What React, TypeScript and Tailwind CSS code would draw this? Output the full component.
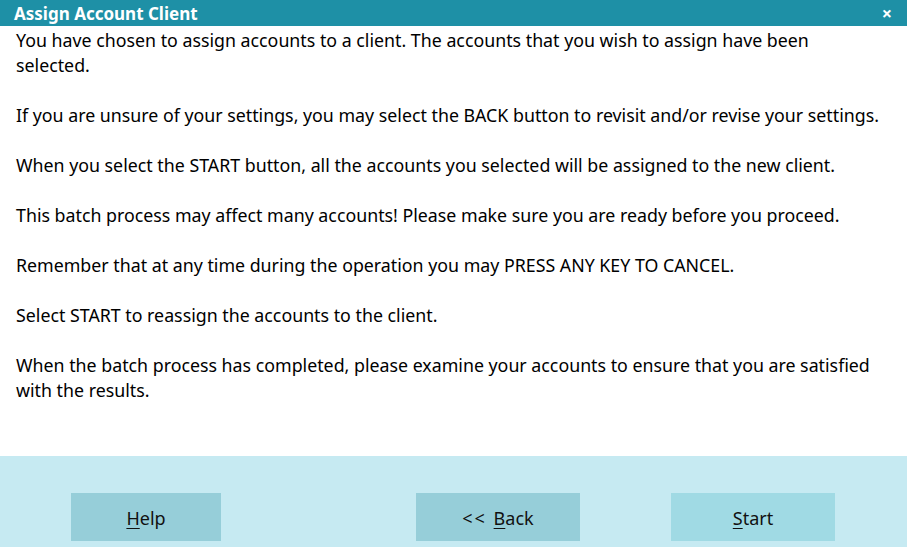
import React from "react";

const paragraphs = [
  "You have chosen to assign accounts to a client. The accounts that you wish to assign have been selected.",
  "If you are unsure of your settings, you may select the BACK button to revisit and/or revise your settings.",
  "When you select the START button, all the accounts you selected will be assigned to the new client.",
  "This batch process may affect many accounts! Please make sure you are ready before you proceed.",
  "Remember that at any time during the operation you may PRESS ANY KEY TO CANCEL.",
  "Select START to reassign the accounts to the client.",
  "When the batch process has completed, please examine your accounts to ensure that you are satisfied with the results.",
];

function Button({
  label,
  hotkey,
  prefix,
  width,
  active,
}: {
  label: string;
  hotkey: string;
  prefix?: string;
  width: string;
  active?: boolean;
}) {
  return (
    <button
      className={`h-[48px] ${width} ${
        active ? "bg-[#a0dae4]" : "bg-[#96ced9]"
      } text-[18px] text-[#111] flex items-center justify-center pt-[2px]`}
    >
      {prefix && (
        <span className="whitespace-pre tracking-[2px]">{prefix}</span>
      )}
      <span className="underline underline-offset-[3px]">{hotkey}</span>
      <span>{label}</span>
    </button>
  );
}

export default function App() {
  return (
    <div
      className="w-[907px] h-[547px] flex flex-col bg-white overflow-hidden"
      style={{ fontFamily: '"Noto Sans", "Open Sans", sans-serif' }}
    >
      {/* title bar */}
      <div className="h-[26px] bg-[#1e90a6] flex items-center justify-between pl-[14px] pr-[15px] text-white">
        <span className="text-[17px] font-bold leading-none">
          Assign Account Client
        </span>
        <span className="text-[18px] font-bold leading-none">×</span>
      </div>

      {/* message */}
      <div className="flex-1 pl-[16px] pr-[25px] pt-[2px] flex flex-col gap-[25px] text-[17.8px] leading-[25px] text-black">
        {paragraphs.map((p, i) => (
          <p key={i}>{p}</p>
        ))}
      </div>

      {/* footer */}
      <div className="h-[91px] bg-[#c6eaf2] flex items-end pb-[6px]">
        <div className="ml-[71px]">
          <Button width="w-[150px]" hotkey="H" label="elp" />
        </div>
        <div className="ml-[195px]">
          <Button width="w-[164px]" prefix="<< " hotkey="B" label="ack" />
        </div>
        <div className="ml-[91px]">
          <Button width="w-[164px]" hotkey="S" label="tart" active />
        </div>
      </div>
    </div>
  );
}
